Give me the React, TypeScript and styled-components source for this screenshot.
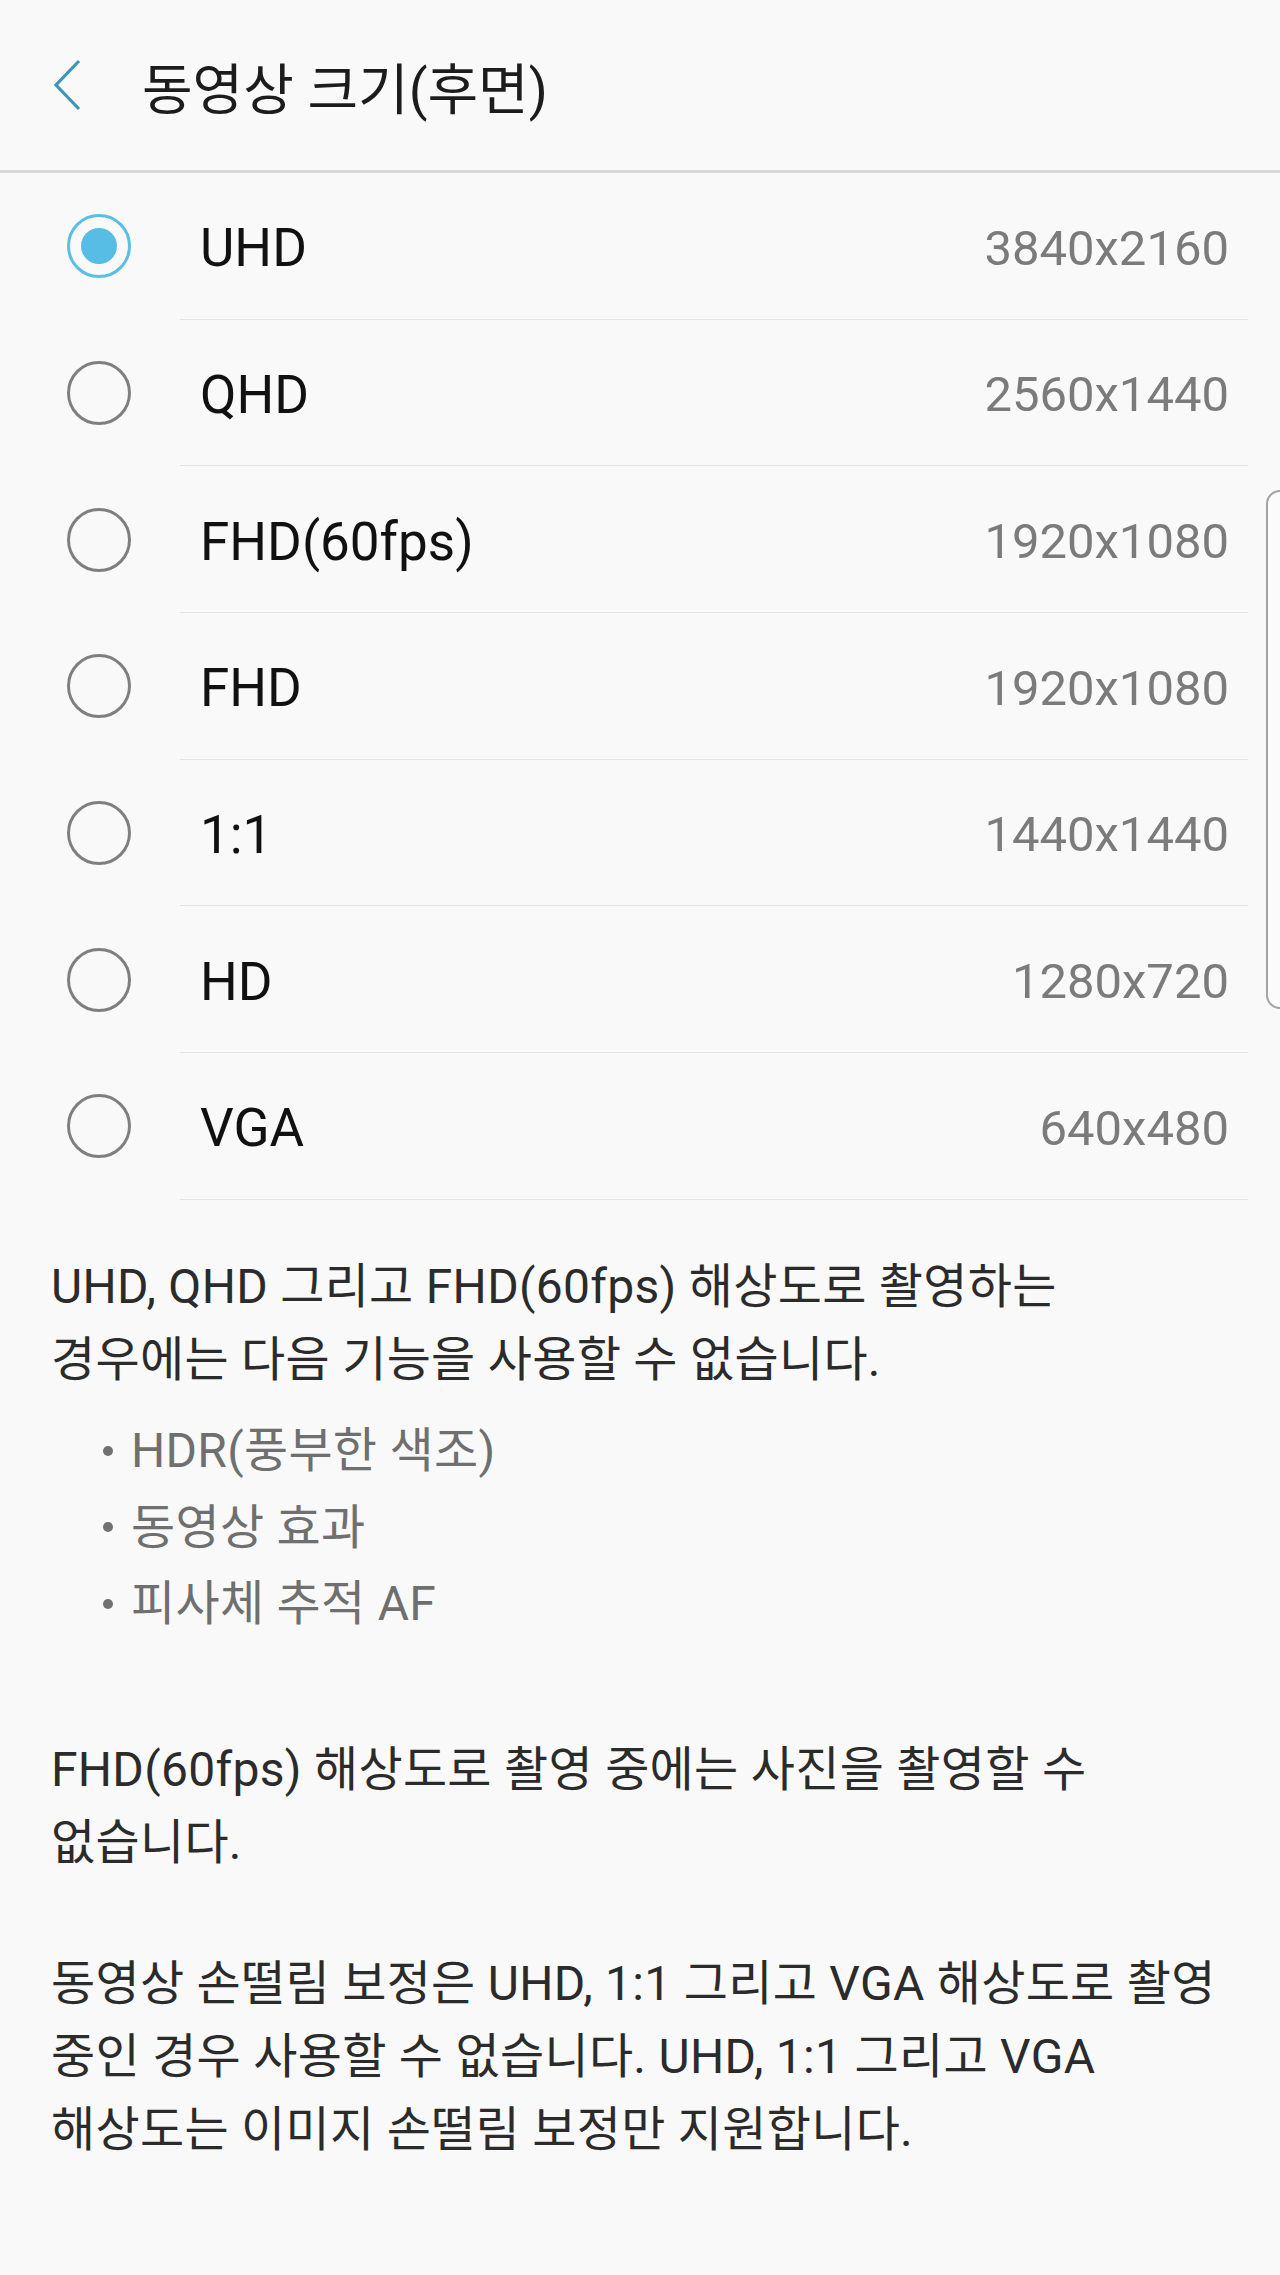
import React from "react";
import styled, {createGlobalStyle} from "styled-components";

const GlobalStyle = createGlobalStyle`
  html, body {
    margin: 0;
    padding: 0;
    background: #f9f9f9;
    overflow-x: hidden;
  }
  * {
    box-sizing: border-box;
  }
`;

interface IOption {
    label: string;
    resolution: string;
    selected?: boolean;
}

const options: IOption[] = [
    {label: "UHD", resolution: "3840x2160", selected: true},
    {label: "QHD", resolution: "2560x1440"},
    {label: "FHD(60fps)", resolution: "1920x1080"},
    {label: "FHD", resolution: "1920x1080"},
    {label: "1:1", resolution: "1440x1440"},
    {label: "HD", resolution: "1280x720"},
    {label: "VGA", resolution: "640x480"},
];

const disabledFeatures = ["HDR(풍부한 색조)", "동영상 효과", "피사체 추적 AF"];

export default function App(): JSX.Element {
    return <Page>
        <GlobalStyle/>
        <Header>
            <BackButton aria-label={"back"}>
                <svg width="32" height="52" viewBox="0 0 32 52">
                    <path d="M27 2 L4 26 L27 50" fill="none" stroke="#3f95b4" strokeWidth="3.2"/>
                </svg>
            </BackButton>
            <Title>동영상 크기(후면)</Title>
        </Header>
        <OptionList>
            {options.map(option =>
                <OptionRow key={option.label}>
                    <RadioCell>
                        <Radio $checked={!!option.selected}/>
                    </RadioCell>
                    <OptionBody>
                        <OptionLabel>{option.label}</OptionLabel>
                        <OptionValue>{option.resolution}</OptionValue>
                    </OptionBody>
                </OptionRow>
            )}
        </OptionList>
        <Notes>
            <Paragraph>
                UHD, QHD 그리고 FHD(60fps) 해상도로 촬영하는<br/>
                경우에는 다음 기능을 사용할 수 없습니다.
            </Paragraph>
            <BulletList>
                {disabledFeatures.map(feature => <Bullet key={feature}>{feature}</Bullet>)}
            </BulletList>
            <Paragraph $gap={91}>
                FHD(60fps) 해상도로 촬영 중에는 사진을 촬영할 수<br/>
                없습니다.
            </Paragraph>
            <Paragraph $gap={68}>
                동영상 손떨림 보정은 UHD, 1:1 그리고 VGA 해상도로 촬영<br/>
                중인 경우 사용할 수 없습니다. UHD, 1:1 그리고 VGA<br/>
                해상도는 이미지 손떨림 보정만 지원합니다.
            </Paragraph>
        </Notes>
        <ScrollThumb/>
    </Page>
}

const Page = styled.div`
  position: relative;
  width: 1280px;
  min-height: 2275px;
  background: #f9f9f9;
  font-family: "Roboto", "Noto Sans CJK KR", sans-serif;
`;

const Header = styled.header`
  display: flex;
  align-items: center;
  height: 173px;
  padding-left: 52px;
  border-bottom: 3px solid #d9d9d9;
`;

const BackButton = styled.div`
  display: flex;
  width: 32px;
  height: 52px;
  margin-right: 58px;
`;

const Title = styled.h1`
  margin: 0;
  font-family: "Roboto", "Noto Sans CJK KR", sans-serif;
  font-size: 55px;
  font-weight: 400;
  color: #1c1c1c;
`;

const OptionList = styled.div`
  display: flex;
  flex-direction: column;
`;

const OptionRow = styled.div`
  display: flex;
  height: 146.67px;
`;

const RadioCell = styled.div`
  display: flex;
  align-items: center;
  width: 180px;
  padding-left: 67px;
`;

const Radio = styled.span<{ $checked: boolean }>`
  display: flex;
  align-items: center;
  justify-content: center;
  width: 64px;
  height: 64px;
  border-radius: 50%;
  border: 3px solid ${props => props.$checked ? "#5bbfe4" : "#7f7f7f"};

  &::after {
    content: "";
    display: ${props => props.$checked ? "block" : "none"};
    width: 36px;
    height: 36px;
    border-radius: 50%;
    background: #58bde4;
  }
`;

const OptionBody = styled.div`
  flex: 1;
  display: flex;
  align-items: center;
  justify-content: space-between;
  margin-right: 32px;
  padding: 5px 19px 0 20px;
  border-bottom: 1.5px solid #e4e4e4;
`;

const OptionLabel = styled.span`
  font-family: "Roboto", "Noto Sans CJK KR", sans-serif;
  font-size: 53px;
  color: #111111;
`;

const OptionValue = styled.span`
  font-family: "Roboto", sans-serif;
  font-size: 49px;
  color: #7b7b7b;
`;

const Notes = styled.section`
  padding: 50px 51px 0;
  font-size: 48px;
  letter-spacing: 0.3px;
  line-height: 73px;
  color: #2b2b2b;
`;

const Paragraph = styled.p<{ $gap?: number }>`
  margin: ${props => props.$gap || 0}px 0 0;
  white-space: nowrap;
`;

const BulletList = styled.ul`
  margin: 17px 0 0;
  padding: 0;
  list-style: none;
`;

const Bullet = styled.li`
  display: flex;
  align-items: center;
  height: 76.5px;
  color: #6f6f6f;

  &::before {
    content: "";
    width: 10px;
    height: 10px;
    margin: 0 18px 0 52px;
    border-radius: 50%;
    background: #727272;
  }
`;

const ScrollThumb = styled.div`
  position: absolute;
  top: 490px;
  right: -14px;
  width: 28px;
  height: 519px;
  border: 2px solid #a3a3a3;
  border-radius: 14px;
  background: #fbfbfb;
`;
